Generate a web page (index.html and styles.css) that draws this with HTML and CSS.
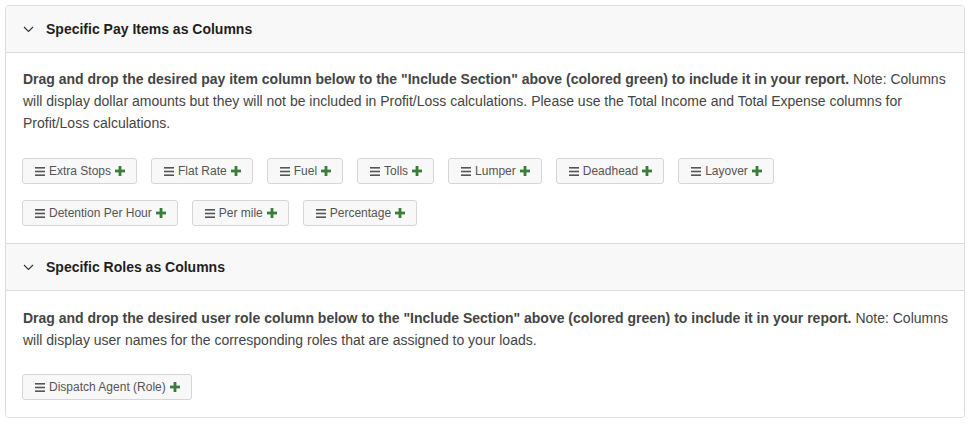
FILE: index.html
```html
<!DOCTYPE html>
<html>
<head>
<meta charset="utf-8">
<link rel="stylesheet" href="styles.css">
</head>
<body>
<div class="panel">
  <div class="section">
    <div class="header">
      <svg class="chev" width="11" height="7" viewBox="0 0 11 7"><path d="M1 1 L5.5 5.5 L10 1" fill="none" stroke="#333" stroke-width="1.1"/></svg>
      <span class="title">Specific Pay Items as Columns</span>
    </div>
    <div class="body">
      <p class="desc"><b>Drag and drop the desired pay item column below to the "Include Section" above (colored green) to include it in your report.</b> Note: Columns will display dollar amounts but they will not be included in Profit/Loss calculations. Please use the Total Income and Total Expense columns for Profit/Loss calculations.</p>
      <div class="items">
        <span class="item"><svg class="bars" width="10" height="9" viewBox="0 0 10 9"><rect y="0" width="10" height="1.6"/><rect y="3.7" width="10" height="1.6"/><rect y="7.4" width="10" height="1.6"/></svg>Extra Stops<svg class="plus" width="10" height="10" viewBox="0 0 10 10"><rect x="3.6" y="0" width="2.8" height="10"/><rect x="0" y="3.6" width="10" height="2.8"/></svg></span>
        <span class="item"><svg class="bars" width="10" height="9" viewBox="0 0 10 9"><rect y="0" width="10" height="1.6"/><rect y="3.7" width="10" height="1.6"/><rect y="7.4" width="10" height="1.6"/></svg>Flat Rate<svg class="plus" width="10" height="10" viewBox="0 0 10 10"><rect x="3.6" y="0" width="2.8" height="10"/><rect x="0" y="3.6" width="10" height="2.8"/></svg></span>
        <span class="item"><svg class="bars" width="10" height="9" viewBox="0 0 10 9"><rect y="0" width="10" height="1.6"/><rect y="3.7" width="10" height="1.6"/><rect y="7.4" width="10" height="1.6"/></svg>Fuel<svg class="plus" width="10" height="10" viewBox="0 0 10 10"><rect x="3.6" y="0" width="2.8" height="10"/><rect x="0" y="3.6" width="10" height="2.8"/></svg></span>
        <span class="item"><svg class="bars" width="10" height="9" viewBox="0 0 10 9"><rect y="0" width="10" height="1.6"/><rect y="3.7" width="10" height="1.6"/><rect y="7.4" width="10" height="1.6"/></svg>Tolls<svg class="plus" width="10" height="10" viewBox="0 0 10 10"><rect x="3.6" y="0" width="2.8" height="10"/><rect x="0" y="3.6" width="10" height="2.8"/></svg></span>
        <span class="item"><svg class="bars" width="10" height="9" viewBox="0 0 10 9"><rect y="0" width="10" height="1.6"/><rect y="3.7" width="10" height="1.6"/><rect y="7.4" width="10" height="1.6"/></svg>Lumper<svg class="plus" width="10" height="10" viewBox="0 0 10 10"><rect x="3.6" y="0" width="2.8" height="10"/><rect x="0" y="3.6" width="10" height="2.8"/></svg></span>
        <span class="item"><svg class="bars" width="10" height="9" viewBox="0 0 10 9"><rect y="0" width="10" height="1.6"/><rect y="3.7" width="10" height="1.6"/><rect y="7.4" width="10" height="1.6"/></svg>Deadhead<svg class="plus" width="10" height="10" viewBox="0 0 10 10"><rect x="3.6" y="0" width="2.8" height="10"/><rect x="0" y="3.6" width="10" height="2.8"/></svg></span>
        <span class="item"><svg class="bars" width="10" height="9" viewBox="0 0 10 9"><rect y="0" width="10" height="1.6"/><rect y="3.7" width="10" height="1.6"/><rect y="7.4" width="10" height="1.6"/></svg>Layover<svg class="plus" width="10" height="10" viewBox="0 0 10 10"><rect x="3.6" y="0" width="2.8" height="10"/><rect x="0" y="3.6" width="10" height="2.8"/></svg></span>
        <span class="item"><svg class="bars" width="10" height="9" viewBox="0 0 10 9"><rect y="0" width="10" height="1.6"/><rect y="3.7" width="10" height="1.6"/><rect y="7.4" width="10" height="1.6"/></svg>Detention Per Hour<svg class="plus" width="10" height="10" viewBox="0 0 10 10"><rect x="3.6" y="0" width="2.8" height="10"/><rect x="0" y="3.6" width="10" height="2.8"/></svg></span>
        <span class="item"><svg class="bars" width="10" height="9" viewBox="0 0 10 9"><rect y="0" width="10" height="1.6"/><rect y="3.7" width="10" height="1.6"/><rect y="7.4" width="10" height="1.6"/></svg>Per mile<svg class="plus" width="10" height="10" viewBox="0 0 10 10"><rect x="3.6" y="0" width="2.8" height="10"/><rect x="0" y="3.6" width="10" height="2.8"/></svg></span>
        <span class="item"><svg class="bars" width="10" height="9" viewBox="0 0 10 9"><rect y="0" width="10" height="1.6"/><rect y="3.7" width="10" height="1.6"/><rect y="7.4" width="10" height="1.6"/></svg>Percentage<svg class="plus" width="10" height="10" viewBox="0 0 10 10"><rect x="3.6" y="0" width="2.8" height="10"/><rect x="0" y="3.6" width="10" height="2.8"/></svg></span>
      </div>
    </div>
  </div>
  <div class="section">
    <div class="header">
      <svg class="chev" width="11" height="7" viewBox="0 0 11 7"><path d="M1 1 L5.5 5.5 L10 1" fill="none" stroke="#333" stroke-width="1.1"/></svg>
      <span class="title">Specific Roles as Columns</span>
    </div>
    <div class="body body2">
      <p class="desc"><b>Drag and drop the desired user role column below to the "Include Section" above (colored green) to include it in your report.</b> Note: Columns will display user names for the corresponding roles that are assigned to your loads.</p>
      <div class="items">
        <span class="item"><svg class="bars" width="10" height="9" viewBox="0 0 10 9"><rect y="0" width="10" height="1.6"/><rect y="3.7" width="10" height="1.6"/><rect y="7.4" width="10" height="1.6"/></svg>Dispatch Agent (Role)<svg class="plus" width="10" height="10" viewBox="0 0 10 10"><rect x="3.6" y="0" width="2.8" height="10"/><rect x="0" y="3.6" width="10" height="2.8"/></svg></span>
      </div>
    </div>
  </div>
</div>
</body>
</html>
```
FILE: styles.css
```css
html, body {
  margin: 0;
  padding: 0;
  background: #ffffff;
}
body {
  font-family: "Liberation Sans", Arial, sans-serif;
  color: #444;
  padding: 5px 6px 0 5px;
}
.panel {
  border: 1px solid #dcdcdc;
  border-radius: 4px;
  overflow: hidden;
  width: 958px;
}
.section + .section .header {
  border-top: 1px solid #dcdcdc;
}
.header {
  height: 46px;
  background: #f8f8f8;
  border-bottom: 1px solid #dcdcdc;
  display: flex;
  align-items: center;
  padding-left: 17px;
}
.chev {
  display: block;
  margin-right: 12px;
}
.title {
  font-weight: bold;
  font-size: 14px;
  color: #1f1f1f;
}
.body {
  background: #fff;
  padding: 15px 16px 17px 16px;
}
.body2 {
  padding-top: 16px;
  padding-bottom: 17px;
}
.desc {
  margin: 0 0 24px 1px;
  font-size: 14px;
  line-height: 22px;
  color: #444;
}
.body2 .desc {
  margin-bottom: 23px;
}
.desc b {
  color: #444;
}
.items {
  display: flex;
  flex-wrap: wrap;
  gap: 16px 14px;
  padding-right: 40px;
}
.item {
  display: inline-flex;
  align-items: center;
  height: 24px;
  padding: 0 11px 0 12px;
  border: 1px solid #d6d6d6;
  border-radius: 3px;
  background: #f8f8f8;
  font-size: 12px;
  color: #555;
}
.bars {
  display: block;
  fill: #555;
  margin-right: 4px;
}
.plus {
  display: block;
  fill: #3a7d3a;
  margin-left: 4px;
}
```
